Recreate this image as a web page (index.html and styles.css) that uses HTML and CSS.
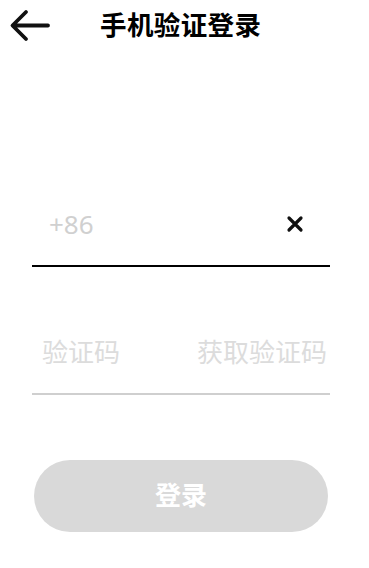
FILE: index.html
```html
<!DOCTYPE html>
<html lang="zh-CN">
<head>
<meta charset="utf-8">
<title>手机验证登录</title>
<link rel="stylesheet" href="styles.css">
</head>
<body>
<div class="page">
  <header class="header">
    <span class="back">
      <svg width="42" height="34" viewBox="0 0 42 34"><path d="M39 16.5H4M17 3L3.5 16.5L17 30" fill="none" stroke="#111" stroke-width="3.8" stroke-linecap="round" stroke-linejoin="round"/></svg>
    </span>
    <h1 class="title">手机验证登录</h1>
  </header>
  <div class="form">
    <div class="field field-phone">
      <span class="prefix">+86</span>
      <span class="clear">
        <svg width="18" height="18" viewBox="0 0 18 18"><path d="M3 3L15 15M15 3L3 15" stroke="#111" stroke-width="3.2" stroke-linecap="round"/></svg>
      </span>
    </div>
    <div class="field field-code">
      <span class="placeholder">验证码</span>
      <span class="get-code">获取验证码</span>
    </div>
    <button class="login"><span class="login-text">登录</span></button>
  </div>
</div>
</body>
</html>
```
FILE: styles.css
```css
html, body {
  margin: 0;
  padding: 0;
  background: #fff;
}
.page {
  width: 369px;
  height: 568px;
  font-family: "Noto Sans CJK SC", "Noto Sans", sans-serif;
}
.header {
  height: 52px;
  display: flex;
  align-items: center;
  padding-left: 9px;
}
.back {
  display: flex;
  width: 42px;
  height: 34px;
}
.title {
  margin: -3px 0 0 49px;
  font-size: 26.5px;
  font-weight: 700;
  color: #000;
  line-height: 1;
  letter-spacing: 0.4px;
}
.form {
  margin-top: 133px;
  padding: 0 39px 0 32px;
}
.field {
  display: flex;
  align-items: center;
  justify-content: space-between;
  height: 80px;
}
.field-phone {
  border-bottom: 2px solid #000;
  padding: 0 26px 0 17px;
}
.prefix {
  font-size: 26px;
  color: #d0d0d0;
  font-family: "Noto Sans", sans-serif;
  font-weight: 400;
  margin-top: -2px;
}
.clear {
  display: flex;
  width: 18px;
  height: 18px;
  margin-top: -2px;
}
.field-code {
  margin-top: 46px;
  border-bottom: 2px solid #cfcfcf;
  padding: 0 3px 0 10px;
}
.placeholder,
.get-code {
  font-size: 26px;
  color: #dcdcdc;
  font-weight: 400;
  margin-top: -6px;
}
.login {
  display: flex;
  align-items: center;
  justify-content: center;
  margin: 65px 0 0 2px;
  width: 294px;
  height: 72px;
  border: none;
  border-radius: 36px;
  background: #d9d9d9;
  color: #fff;
  font-family: "Noto Sans CJK SC", sans-serif;
  font-size: 26px;
  font-weight: 700;
  padding: 0;
}
.login-text {
  margin-top: -5px;
}
```
